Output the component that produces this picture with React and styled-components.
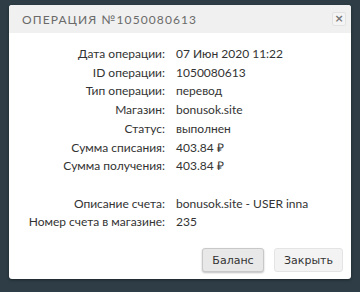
import React from "react";
import styled, { createGlobalStyle } from "styled-components";

const GlobalStyle = createGlobalStyle`
  html, body {
    margin: 0;
    padding: 0;
    background: #2e3d46;
    font-family: "Lato", "Open Sans", sans-serif;
  }
`;

const Page = styled.div`
  width: 360px;
  height: 292px;
  padding: 5px 9px 0 9px;
  box-sizing: border-box;
`;

const Dialog = styled.div`
  width: 342px;
  height: 274px;
  background: #fff;
  border-radius: 3px;
  box-shadow: 0 1px 3px rgba(0, 0, 0, 0.4);
  display: flex;
  flex-direction: column;
  overflow: hidden;
`;

const Header = styled.div`
  height: 28px;
  background: #f0f0f0;
  display: flex;
  align-items: center;
  justify-content: space-between;
  padding: 0 5px 0 13px;
`;

const Title = styled.div`
  font-size: 12px;
  letter-spacing: 1.1px;
  color: #6a6a6a;
  text-transform: uppercase;
  padding-top: 1px;
`;

const CloseBtn = styled.button`
  width: 14px;
  height: 14px;
  padding: 0;
  border: 1px solid #e2e2e2;
  border-radius: 2px;
  background: #f4f4f4;
  color: #777;
  font-size: 11px;
  font-weight: bold;
  line-height: 10px;
  font-family: "DejaVu Sans", sans-serif;
  margin-top: -1px;
`;

const Body = styled.div`
  flex: 1;
  padding: 12px 0 0 0;
`;

const Info = styled.div`
  display: grid;
  grid-template-columns: 156px 1fr;
  column-gap: 11px;
  font-size: 12px;
  line-height: 18.7px;
  color: #333;
`;

const Label = styled.div`
  text-align: right;
  white-space: nowrap;
`;

const Value = styled.div`
  white-space: nowrap;
`;

const Spacer = styled.div`
  grid-column: 1 / 3;
  height: 18.7px;
`;

const Footer = styled.div`
  display: flex;
  justify-content: flex-end;
  gap: 10px;
  padding: 0 8px 7px 0;
`;

const Button = styled.button`
  height: 24px;
  padding: 0;
  width: ${(p) => p.$w}px;
  font-family: "DejaVu Sans", sans-serif;
  font-size: 11px;
  color: #333;
  border-radius: 3px;
  border: 1px solid ${(p) => (p.$primary ? "#c8c8c8" : "#e4e4e4")};
  background: ${(p) => (p.$primary ? "#e8e8e8" : "#f3f3f3")};
  box-shadow: ${(p) => (p.$primary ? "0 1px 2px rgba(0,0,0,0.25)" : "none")};
`;

const rows = [
  ["Дата операции:", "07 Июн 2020 11:22"],
  ["ID операции:", "1050080613"],
  ["Тип операции:", "перевод"],
  ["Магазин:", "bonusok.site"],
  ["Статус:", "выполнен"],
  ["Сумма списания:", "403.84 ₽"],
  ["Сумма получения:", "403.84 ₽"],
  null,
  ["Описание счета:", "bonusok.site - USER inna"],
  ["Номер счета в магазине:", "235"],
];

export default function App() {
  return (
    <Page>
      <GlobalStyle />
      <Dialog>
        <Header>
          <Title>Операция №1050080613</Title>
          <CloseBtn>×</CloseBtn>
        </Header>
        <Body>
          <Info>
            {rows.map((r, i) =>
              r ? (
                <React.Fragment key={i}>
                  <Label>{r[0]}</Label>
                  <Value>{r[1]}</Value>
                </React.Fragment>
              ) : (
                <Spacer key={i} />
              )
            )}
          </Info>
        </Body>
        <Footer>
          <Button $primary $w={62}>Баланс</Button>
          <Button $w={69}>Закрыть</Button>
        </Footer>
      </Dialog>
    </Page>
  );
}
